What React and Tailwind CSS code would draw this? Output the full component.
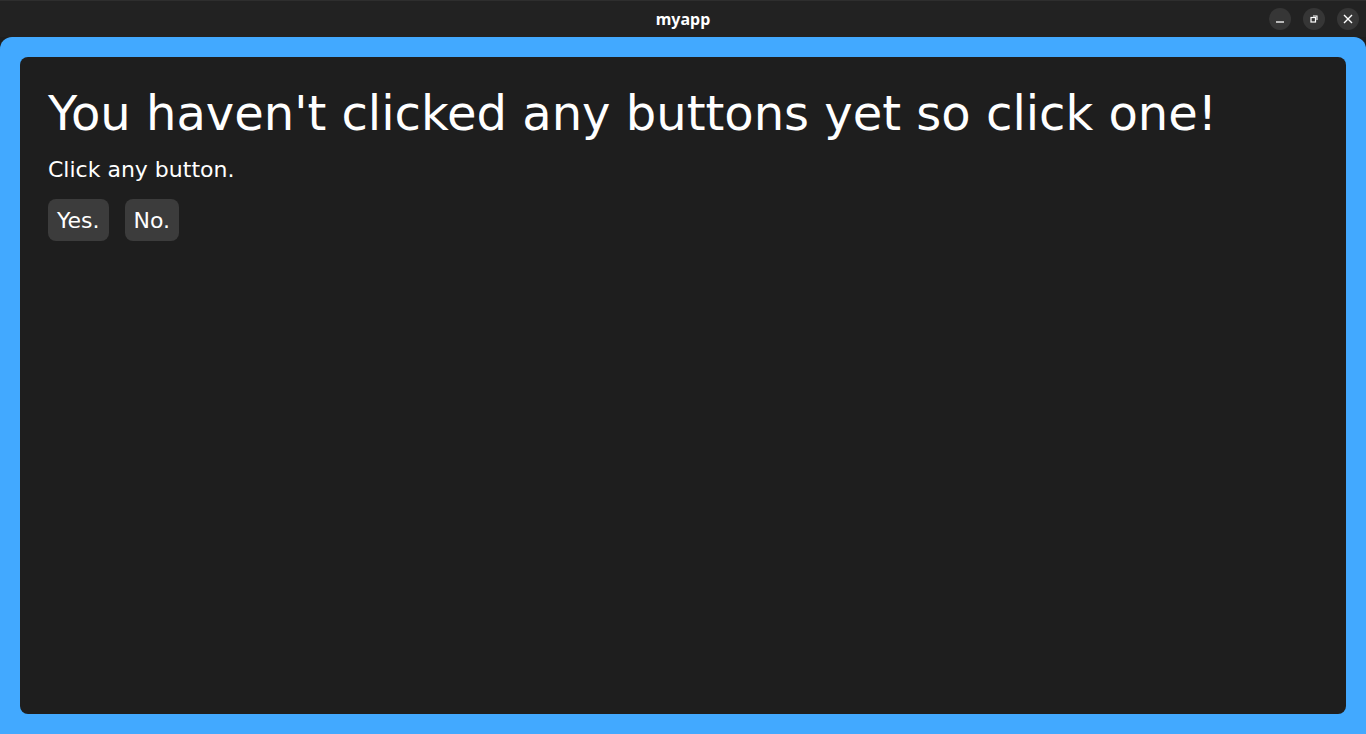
export default function App() {
  return (
    <div className="w-[1366px] h-[734px] bg-[#1e1e1e] flex flex-col overflow-hidden" style={{ fontFamily: '"DejaVu Sans", sans-serif' }}>
      <div className="h-[37px] shrink-0 bg-[#222222] border-t border-[#2e2e2e] flex items-center relative">
        <div className="flex-1 text-center text-white font-bold text-[16px]" style={{ fontFamily: '"Noto Sans", "DejaVu Sans", sans-serif' }}>myapp</div>
        <div className="absolute right-[7px] top-[7px] flex gap-[12px]">
          <div className="w-[22px] h-[22px] rounded-full bg-[#363636] flex items-center justify-center">
            <svg width="12" height="12" viewBox="0 0 12 12"><path d="M2 9h8" stroke="#fff" strokeWidth="1.3" /></svg>
          </div>
          <div className="w-[22px] h-[22px] rounded-full bg-[#363636] flex items-center justify-center">
            <svg width="12" height="12" viewBox="0 0 12 12"><rect x="3" y="4.5" width="4.5" height="4.5" fill="none" stroke="#fff" strokeWidth="1.2" /><path d="M5 3h4v4" fill="none" stroke="#fff" strokeWidth="1.1" /></svg>
          </div>
          <div className="w-[22px] h-[22px] rounded-full bg-[#363636] flex items-center justify-center">
            <svg width="12" height="12" viewBox="0 0 12 12"><path d="M2 2l8 8M10 2l-8 8" stroke="#fff" strokeWidth="1.4" /></svg>
          </div>
        </div>
      </div>
      <div className="flex-1 bg-[#42a9ff] rounded-t-[12px] p-[20px] flex">
        <div className="flex-1 bg-[#1e1e1e] rounded-[8px] px-[28px] pt-[28px] text-white">
          <h1 className="text-[48px] leading-[56px]">You haven't clicked any buttons yet so click one!</h1>
          <p className="text-[22px] leading-[28px] mt-[15px]">Click any button.</p>
          <div className="flex gap-[16px] mt-[15px]">
            <button className="h-[42px] px-[9px] bg-[#3c3c3c] rounded-[8px] text-[22px] text-white">Yes.</button>
            <button className="h-[42px] px-[9px] bg-[#3c3c3c] rounded-[8px] text-[22px] text-white">No.</button>
          </div>
        </div>
      </div>
    </div>
  );
}
